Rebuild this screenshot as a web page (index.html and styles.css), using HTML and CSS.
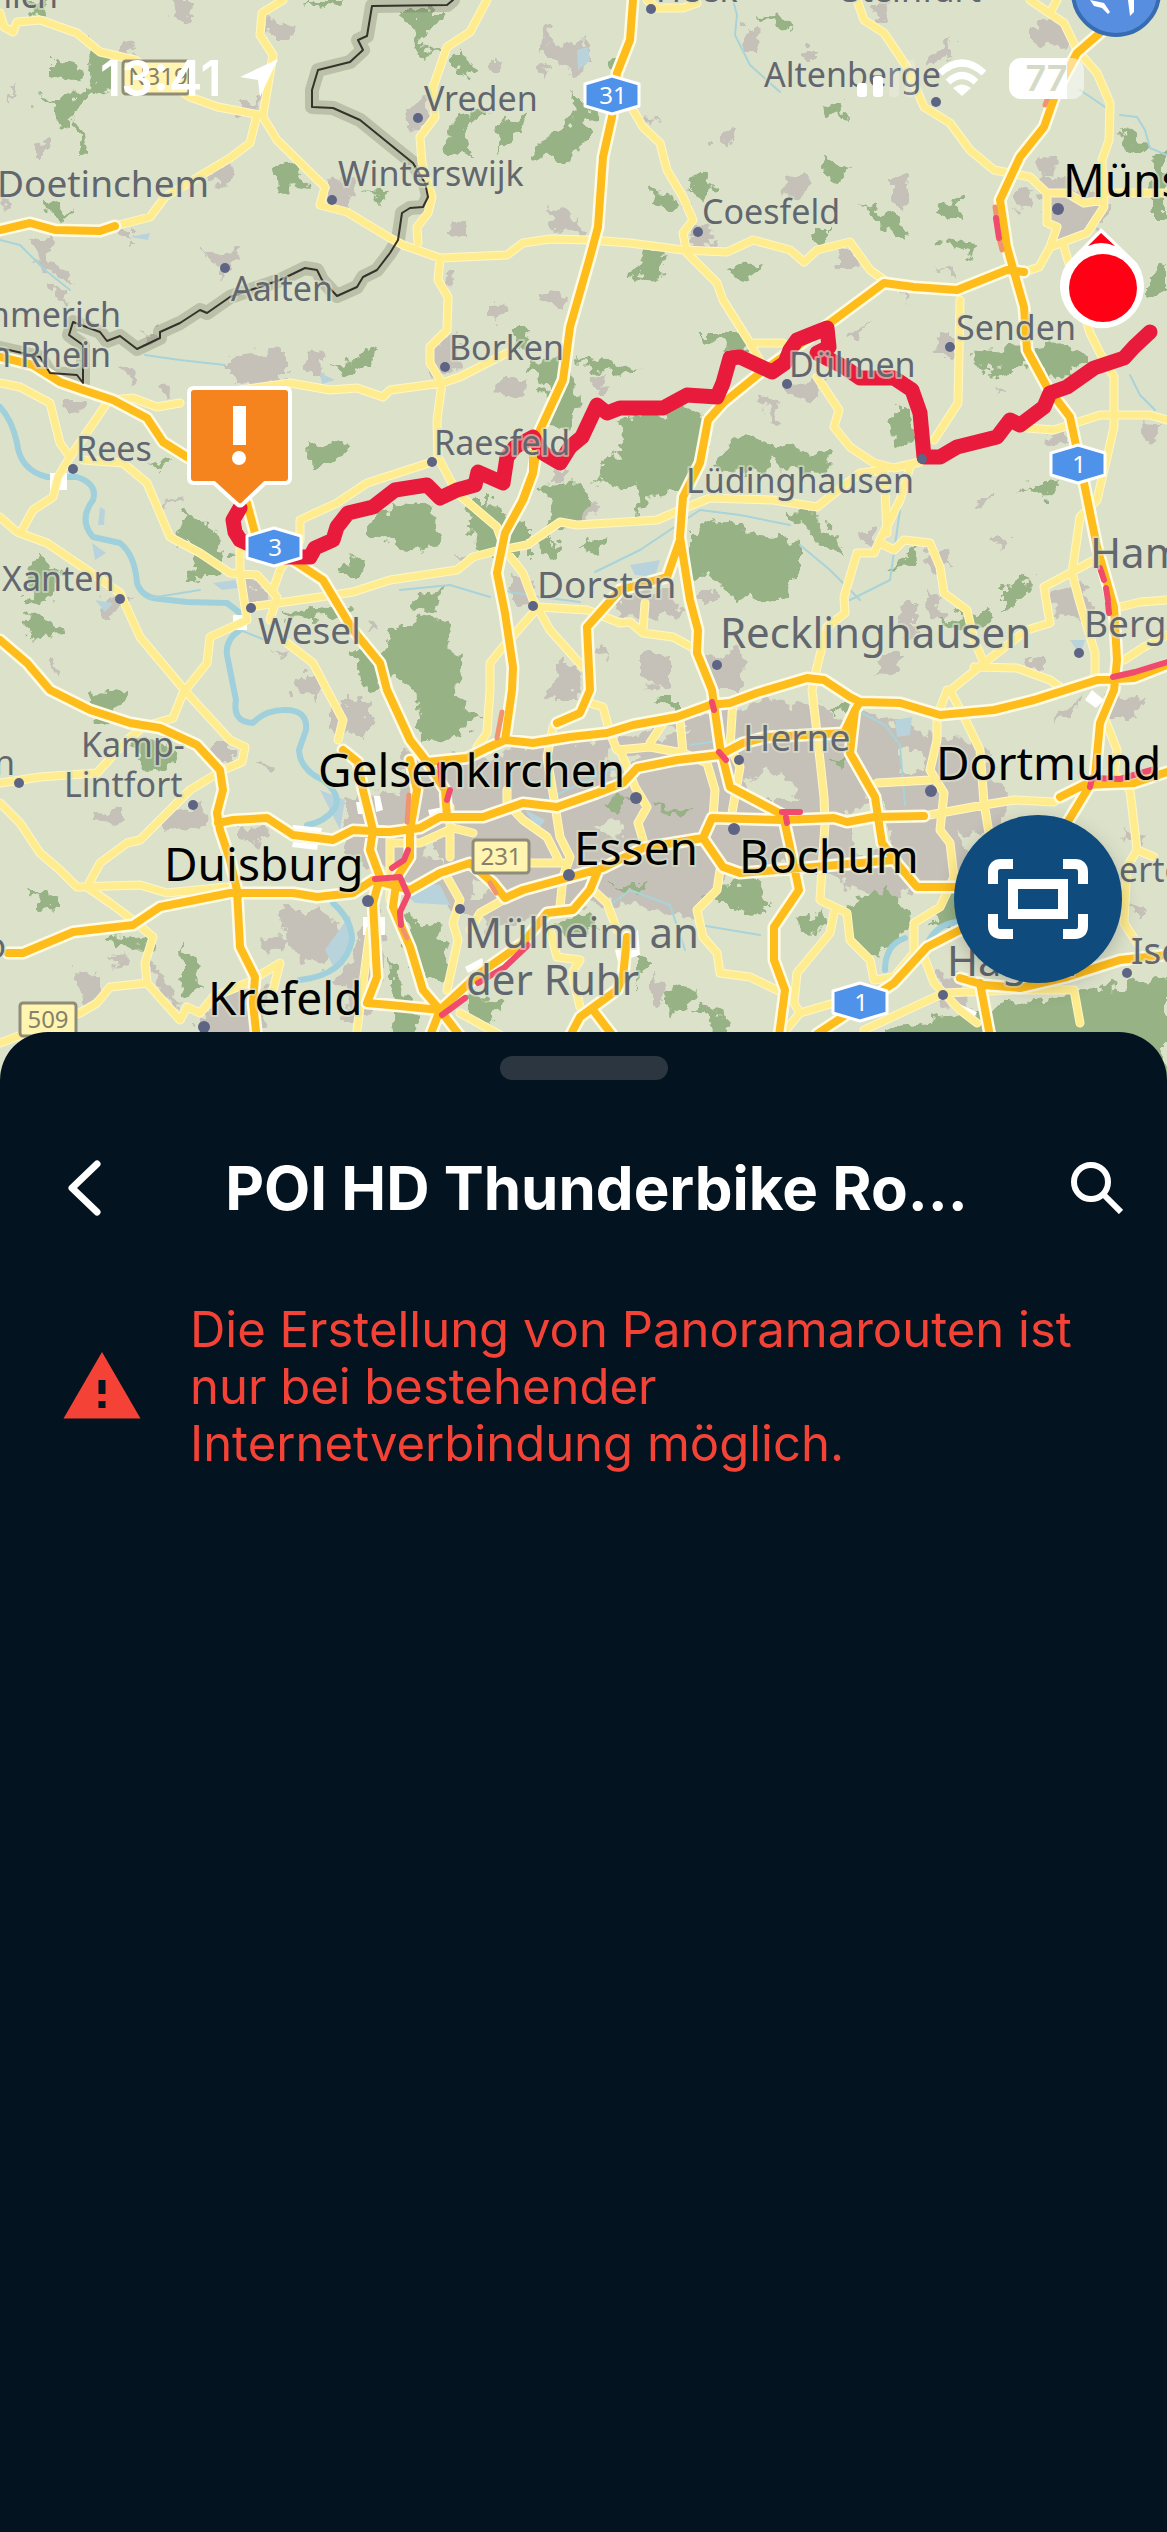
FILE: index.html
```html
<!DOCTYPE html>
<html lang="de">
<head>
  <meta charset="UTF-8">
  <title>POI HD Thunderbike</title>
  <meta name="viewport" content="width=device-width, initial-scale=1">
  <link rel="stylesheet" href="styles.css">
</head>
<body>

  <main class="map">
    <svg class="map-canvas" viewBox="0 0 1167 1080" preserveAspectRatio="xMidYMin slice">
      <defs>
        <filter id="rough" x="0" y="0" width="100%" height="100%">
          <feTurbulence type="fractalNoise" baseFrequency="0.07" numOctaves="3" seed="4" result="n"/>
          <feDisplacementMap in="SourceGraphic" in2="n" scale="24" xChannelSelector="R" yChannelSelector="G"/>
        </filter>
        <path id="hex" d="M0 -19 L27 -11 V11 L0 19 L-27 11 V-11 Z"/>

        <!-- Landstrassen -->
        <path id="minor" d="M0 13 L4 27 13 32 17 22 40 20 77 33 100 52 135 60 190 97 218 107 260 115
          M283 0 L262 13 260 35 273 55 263 115 M257 115 L250 143 230 158 205 173 165 197 150 217 115 226
          M263 117 L277 140 325 187 320 205 347 212 390 238 403 245 440 258 507 255 523 243 550 239 590 240 630 243 683 250 727 252 753 240 790 250 804 262 817 250 850 242 870 270 887 282
          M487 0 L470 32 447 47 433 87 435 117 420 137 422 163 432 197 428 213 417 227 418 243
          M440 258 L438 280 448 297 447 330 430 347 430 363 442 383 437 420 438 457 457 493 497 527 505 550 523 573 533 600 550 630 583 667
          M113 400 L133 398 157 407 180 403 M240 390 L290 383 330 390 357 388 383 397 390 390 442 383 460 377 507 353
          M0 383 L20 387 50 403 60 443 70 457 107 403 M70 457 L58 477 53 497 33 510 22 530
          M0 517 L17 532 47 543 87 570 120 593 140 637 187 693 230 740 245 747 242 762 223 770 190 790 140 840 127 843 100 863 87 887
          M83 460 L123 463 147 483 170 537 200 553 230 573 257 575 277 597 270 620 M240 543 V573 L247 620 210 637 207 663 183 693 173 718 143 727 127 740 97 773 40 777 0 783
          M250 607 L320 597 353 592 390 580 457 570 473 557 500 550 527 545 560 522 577 525 657 520 680 510 710 498 773 500 817 507 860 473 884 470
          M273 590 L280 570 300 540 V520 L337 503 367 483 432 462
          M287 643 L313 663 327 690 343 720 338 740 M0 803 L20 823 40 853 60 870 77 887 140 885 167 893 227 887 M193 903 V893
          M87 887 L110 903 133 920 153 937 145 963 147 983 180 1020 187 1007 200 1013 213 997 247 983 280 963 273 990 M147 983 L110 987 97 1003 80 1013 0 1043
          M633 110 L643 127 660 143 667 170 683 197 693 220 683 233 687 253 717 283 723 300 750 343 783 343 M750 343 L765 370
          M647 0 L657 8 683 8 697 3
          M857 0 L864 20 884 33 907 67 924 107 950 123 970 150 994 170 1030 177 1047 193 1067 193 1084 203 1104 200
          M1047 193 V223 L1057 227 1050 247 1087 233 1104 207 1102 160 1109 140 1110 103 1097 73 1077 50 1064 23 1030 0 M1050 13 L1057 0
          M1050 247 L1039 267 1024 272 M1064 247 L1070 267 1090 333 1100 353 1114 377 V427 L1097 500 1080 517 1072 573 1080 603 1095 653 V677
          M1104 193 H1167 M1027 428 L1054 430 1100 415 1150 415 1167 420 M960 300 L958 403 934 440
          M817 377 L839 410 834 427 850 447 874 463 894 468 920 462 M884 470 L887 533 M910 467 L900 500 880 540 874 553 857 553 844 597 845 613 827 627 817 667 812 690 817 733 824 797 825 823 820 900 847 913 850 940 870 960 874 980
          M880 543 L894 550 904 540 930 543 940 567 944 593 967 610 974 640 984 663 1027 630 1050 623 1044 587 1070 573 1094 560
          M984 663 L947 693 M974 667 L1017 668 1050 680 1064 690
          M947 690 L937 717 V740 L930 770 944 793 940 830 950 843 954 877 940 907 914 923 V953 L894 977 874 980
          M877 783 L930 780 M924 816 L984 805 1014 800 1054 802 M950 690 L967 723 980 750 984 803 989 833
          M834 913 L830 933 797 973 794 1003 800 1013 834 1003 M784 1032 L800 1013 M864 1030 L907 1010 944 993 1014 990 1074 990 1080 1023 M924 957 L934 983 960 1010 977 1023
          M1104 717 L1117 750 1114 773 1130 790 1137 850 1127 867 1124 923 1137 943 M1137 850 L1154 857
          M1120 607 L1140 602 1167 600 M1124 660 L1144 647 1167 635
          M490 690 L487 733 477 747 M533 613 L503 647 490 663 V690 M537 607 L587 610 620 623 630 622 643 633 673 637 697 650 M645 603 L643 630
          M553 727 L547 757 553 793 560 837 570 857 563 877 560 907 M507 790 V803 L523 820 547 837 560 863
          M590 703 L603 707 610 733 617 750 650 747 683 753 707 763 715 790 713 817 M733 700 L730 747 740 767 732 813 M680 720 L683 753 M663 723 L650 743
          M620 750 L635 787 647 807 638 823 643 840 M390 843 L420 843 453 828 473 833 M450 807 V857 M447 877 L460 900 453 923 458 940 447 990
          M503 900 L480 913 470 930 M530 863 H563 M593 890 L607 903 617 930 M550 930 L557 957 580 960 572 973 580 1007
          M720 870 L717 890 697 910 703 937 717 953 720 973 750 977 783 993 M460 1013 L500 1035 M370 930 L357 1030 M390 840 V900"/>

        <!-- Autobahnen -->
        <path id="major" d="M0 230 L30 223 55 230 100 231 115 226
          M633 0 L630 40 617 73 612 117 603 157 598 227 590 257 570 327 563 380 540 430 533 473 523 500 505 533 497 573 505 613 513 667 512 690 505 740
          M427 762 L467 758 487 748 505 740 533 743 570 737 607 733 633 725 677 717 710 705 730 703 757 693 807 678 824 680 850 697 860 702 900 703 940 715 994 710 1034 700 1097 680 1134 678 1167 665
          M0 357 L33 365 60 382 83 390 113 400 147 418 163 442 187 457 230 480 247 503 255 533 275 550 297 563 323 580 353 630 380 663 387 690 410 740 427 762 445 790 447 817
          M0 640 L27 663 50 690 90 710 130 723 160 728 197 745 220 770 223 790 217 813 220 830 230 860 237 890 240 947 255 977 253 1003 257 1040
          M218 823 L233 820 267 818 293 835 333 840 353 830 390 832 420 828 440 817 483 817 523 803 557 807 597 793 623 783 637 768 677 760 720 755 743 743 767 737 844 733 855 710 860 702
          M830 323 L760 373 723 403 708 420 700 463 683 497 680 537 690 600 698 630 697 653 712 690 720 747 730 787 783 815 790 847 799 890 774 927 774 960 785 990 779 1036
          M830 323 L884 283 914 287 957 290 1007 270 1024 272 M680 540 L667 577 620 590 587 627 590 690 580 713 557 723
          M1116 20 L1100 33 1077 53 1057 90 1044 127 1020 157 1000 200 1007 247 1024 307 1027 350 1047 387 1070 417 1084 483 1097 547 1114 607 1117 660 1114 690 1100 723 1095 777 1067 823 1030 870
          M1060 797 L1084 785 1134 783 1167 772
          M8 953 H23 L73 932 133 925 160 907 230 893 293 893 317 897 353 893 373 880 410 890 440 873 470 863 493 883 505 898 523 890 567 878 603 868 643 848 703 838 712 818 783 820 834 818 847 822 874 817 924 816
          M703 838 L723 867 740 873 814 867 894 860 900 867 917 887 954 887 M855 710 L850 753 875 797 882 843 897 863
          M343 750 L358 762 363 790 373 830 370 850 380 877 373 903 377 977 367 1003 390 1005 440 1010
          M410 760 L417 790 410 830 410 857 397 877 393 907 410 947 423 990 440 1010 460 1036 M440 1010 L430 1036
          M440 1010 L480 973 523 943 547 913 573 910 590 890 597 873
          M627 937 L623 977 617 990 580 1017 570 1036 M593 1010 L613 1036
          M817 1034 L894 983 927 947 960 930 M960 978 L984 985 1020 988 1067 977 1120 960 1147 957 1167 955 M980 983 L990 1036"/>
      </defs>

      <rect class="land" width="1167" height="1080"/>

      <!-- Siedlungen -->
      <g class="urban" filter="url(#rough)">
        <path d="M400 750 L480 760 540 745 620 735 700 715 770 700 860 710 920 730 980 745 1010 800 1000 850 960 880 880 900 790 860 720 880 690 920 620 900 560 910 490 930 440 900 400 880 370 840 400 790Z"/>
        <path d="M370 740 L330 730 330 700 370 700Z M345 800 L400 790 400 870 345 860Z M280 910 L320 910 345 940 320 970 290 950Z M260 935 L290 940 280 955 265 950Z M340 980 L375 900 385 950 370 1020 345 1020Z M200 1015 L240 990 270 985 260 1040 200 1040Z"/>
        <path d="M165 810 L205 800 208 825 185 835 165 825Z M210 745 L235 745 235 765 215 765Z M240 825 L270 830 265 845 240 840Z M75 970 L100 975 100 1005 80 1000Z M150 960 L170 985 180 1010 155 985Z M105 958 L128 955 115 970Z M88 815 L120 810 120 825 92 823Z M255 760 L275 765 272 775Z"/>
        <path d="M172 0 L192 0 190 15 175 20Z M118 38 L135 40 130 55 118 50Z M268 20 L295 25 290 38 270 38Z M5 85 L18 85 12 100Z M32 145 L52 142 50 155 35 155Z M240 100 L260 100 255 115 240 115Z M210 170 L232 163 230 185 210 183Z M330 180 L352 183 350 207 328 205Z"/>
        <path d="M30 240 L52 240 50 260 70 275 75 285 40 270Z M205 252 L240 250 235 270 220 272Z M120 230 L135 230 135 240 122 240Z M50 285 L65 290 65 310Z M0 190 L12 200 5 215Z M140 330 L165 330 150 345Z"/>
        <path d="M230 355 L285 350 285 385 230 382Z M305 350 L325 352 322 375 305 375Z M160 387 L173 388 172 397 160 395Z M65 400 L85 400 82 413 68 412Z M123 365 L135 370 130 385Z M150 505 L185 495 182 502Z"/>
        <path d="M407 105 L427 95 430 120 415 135Z M545 25 L553 25 552 45 540 50Z M548 45 L590 40 590 65 575 72 550 62Z M490 60 L503 62 500 72 490 72Z M535 67 L548 68 540 80Z M550 210 L580 215 582 235 555 230Z M450 225 L465 223 460 240 450 238Z M490 300 L505 303 500 322 490 315Z M540 293 L570 295 560 305 540 303Z M445 273 L455 273 450 288Z"/>
        <path d="M645 112 L655 118 652 127Z M745 25 L760 27 758 50 745 47Z M715 137 L740 132 738 142 715 144Z M690 220 L712 225 715 248 690 247Z M430 345 L455 335 460 370 430 375Z M495 380 L525 380 522 395 497 392Z M590 375 L605 375 602 390 592 390Z M555 470 L567 470 565 480 555 482Z"/>
        <path d="M875 0 L890 0 885 20 878 22Z M800 47 L815 47 815 62 805 62Z M930 50 L955 40 950 55 930 62Z M1030 25 L1060 20 1068 45 1045 48 1030 38Z M1035 160 L1058 155 1055 172 1038 172Z M1015 190 L1035 190 1030 212 1015 210Z M1040 170 L1105 200 1105 225 1060 245 1045 225Z M890 180 L908 182 905 205 890 200Z M785 180 L805 178 803 200 787 198Z"/>
        <path d="M838 250 L857 250 855 265 838 265Z M940 265 L952 270 950 280Z M898 290 L910 295 908 302Z M845 335 L870 328 860 340Z M935 335 L955 335 955 355 937 355Z M785 385 L825 378 815 400 790 395Z M755 395 L775 400 780 425 765 410Z M990 387 L1010 395 1000 398Z M1045 435 L1067 430 1067 445 1047 447Z M1140 420 L1163 422 1155 440 1143 435Z"/>
        <path d="M975 495 L990 495 985 510 977 508Z M995 537 L1008 537 1008 543 997 545Z M857 530 L875 530 875 547 860 545Z M925 550 L950 550 955 565 935 570Z M925 590 L940 595 945 625 930 615Z M1050 590 L1090 585 1085 620 1055 615Z M900 605 L915 605 915 640 905 635Z M875 655 L905 655 900 672 875 675Z M1025 660 L1045 655 1045 670 1030 670Z"/>
        <path d="M455 555 L467 555 465 565 457 565Z M560 515 L595 500 600 510 565 530Z M510 575 L535 580 530 605 510 600Z M620 590 L670 590 680 615 650 620 620 615Z M700 590 L715 590 715 605 700 605Z M700 660 L740 650 745 690 710 690Z M560 660 L580 665 575 700 545 700Z M600 650 L607 645 608 660Z M640 655 L670 650 670 690 640 680Z"/>
        <path d="M245 575 L270 590 265 605 248 605Z M100 600 L132 595 125 610 105 615Z M270 645 L290 650 285 660Z M290 675 L320 675 320 700 300 695Z M365 620 L378 622 372 632Z M50 660 L60 665 58 680Z M1105 695 L1145 700 1130 720 1105 720Z M1120 830 L1145 835 1140 850Z M1060 710 L1080 700 1070 720 1050 725Z M650 975 L665 985 660 1010 650 1005Z M940 975 L960 970 970 1010 940 1005Z M1125 900 L1150 905 1140 925Z"/>
      </g>
      <path class="land" filter="url(#rough)" d="M610 750 L640 760 630 775 605 770Z M850 810 L885 800 890 850 850 850Z M740 780 L780 770 800 800 760 800Z M590 825 L625 820 620 840Z M475 875 L500 890 470 900Z M420 850 L440 835 440 865Z M900 750 L925 750 920 775 900 775Z M960 830 L990 840 980 870Z M650 720 L690 730 660 740Z M830 710 L845 700 850 725Z"/>

      <!-- Wald -->
      <g class="forest" filter="url(#rough)">
        <path d="M50 60 L82 68 78 78 60 73 50 75Z M82 42 L110 52 115 85 95 90 83 103 68 127 57 125 50 105 38 97 62 102 88 87 97 65Z M77 115 L82 135 87 155 75 153Z M275 170 L293 163 310 190 295 188 280 192Z M42 200 L73 212 65 220 48 215Z M362 190 L388 195 385 200Z M20 0 L50 0 48 17 30 15Z M305 0 L345 0 340 7 310 5Z"/>
        <path d="M400 12 L445 12 440 25 422 35 425 50 437 55 418 58 414 30Z M455 50 L475 65 468 82 455 70Z M445 130 L460 115 492 110 470 125 462 145 475 158 450 150Z M495 125 L527 113 515 135 500 152 498 140Z M573 92 L597 112 590 120 582 150 562 163 530 153 545 138 570 128Z M610 65 L622 52 618 75Z"/>
        <path d="M702 170 L714 185 707 200 688 193Z M652 190 L685 203 668 213 653 208Z M628 278 L640 257 667 252 658 280 645 272Z M728 268 L765 262 755 278 732 275Z M525 370 L560 355 580 395 570 430 550 425 545 385Z M577 357 L610 362 640 368 620 375 590 370Z M510 330 L530 330 525 345 515 342Z M700 333 L745 333 755 355 720 345Z M757 15 L790 18 788 32Z"/>
        <path d="M617 422 L690 405 708 420 700 457 683 490 655 495 638 512 640 490 593 483 607 460 625 450Z M717 453 L750 433 775 450 765 470 722 472Z M395 505 L430 508 440 540 423 550 390 545 363 527Z M467 500 L490 500 527 527 527 560 500 560 472 543Z M540 487 L577 483 592 500 573 517 550 545 552 510Z M540 540 L563 545 557 560 542 555Z M580 545 L608 537 600 555Z"/>
        <path d="M690 533 L723 517 760 535 800 540 800 570 780 605 740 597 690 570Z M417 593 L447 590 430 612 415 608Z M390 630 L440 615 455 627 447 650 463 660 453 690 483 717 450 742 420 737 415 690 390 670Z M187 510 L213 530 230 557 207 583 185 580 200 553 175 535Z M38 553 L60 570 50 603 27 600 30 565Z M27 612 L60 630 53 640 30 637Z M305 440 L320 448 345 440 340 458 310 470Z"/>
        <path d="M280 612 L347 605 345 615 290 618Z M333 563 L367 555 363 575 340 575Z M395 627 L405 660 390 680 372 695 350 650 380 655Z M333 368 L375 350 372 362 345 375Z M145 465 L170 460 165 472Z M784 510 L817 513 847 553 820 545 805 525Z M894 407 L910 413 912 450 895 447Z M770 445 L830 457 827 473 780 470Z M967 350 L1067 345 1090 357 1050 382 1040 365 990 375Z M1024 487 L1060 482 1045 498Z"/>
        <path d="M1000 587 L1034 577 1017 607 1000 612Z M937 620 L987 610 1000 622 960 630Z M887 570 L914 547 917 562Z M820 157 L850 168 838 183 825 178Z M934 213 L962 195 963 225 950 218Z M940 237 L975 243 973 257 945 248Z M860 203 L900 220 905 237 880 228Z M820 105 L840 100 843 118 822 115Z M807 230 L835 230 822 247Z M1118 122 L1140 135 1142 150 1125 145Z M1155 155 L1167 150 V215 H1150Z M1150 275 L1167 265 V290 L1150 295Z"/>
        <path d="M97 690 L125 693 113 722 85 715Z M130 735 L178 745 170 765 145 772Z M28 890 L60 895 60 910 42 908Z M180 943 L193 960 202 990 182 995Z M110 935 L155 940 150 946 115 945Z M405 917 L440 925 452 973 423 985 408 945Z M390 957 L410 1000 420 1040 393 1040Z M465 997 L505 1000 490 1020 465 1017Z M663 993 L695 985 690 1007 670 1015Z M698 1003 L728 1020 725 1036 708 1030Z"/>
        <path d="M847 905 L890 885 900 905 912 925 877 960 852 940Z M954 890 L965 925 930 923Z M797 923 L825 910 815 940Z M860 1040 L900 1025 1000 1008 1084 990 1134 983 1167 980 V1080 H860Z M555 925 L590 915 600 930 560 935Z M700 890 L760 880 770 905 720 905Z M610 885 L650 885 640 895Z M650 805 L690 810 680 818Z M600 800 L630 795 620 815Z M830 760 L850 760 840 770Z M655 700 L675 700 675 712Z M830 705 L845 705 838 715Z M740 895 L765 900 760 915 735 910Z M635 950 L648 960 635 990Z"/>
      </g>

      <!-- Gewässer -->
      <g class="lake">
        <path d="M577 50 L588 47 590 60 578 70Z M630 565 L660 560 655 577 635 575Z M895 720 L912 717 910 735 897 737Z M325 950 L350 915 353 940 335 970Z M95 600 L113 603 105 612Z M1070 640 L1085 640 1080 655Z M390 880 L440 885 450 905 415 903Z M130 237 L150 233 148 240Z M320 373 L335 380 322 384Z M525 810 L545 820 538 830Z M320 790 L345 800 340 830 330 810Z"/>
        <path d="M100 507 L105 510 104 525 98 525Z M92 543 L106 553 95 560Z M213 583 L235 580 238 588 222 590Z"/>
      </g>
      <path class="river" d="M0 407 Q12 420 17 443 Q20 470 47 477 L77 477 Q98 484 93 500 Q78 520 93 537 L120 543 Q135 555 137 583 Q142 598 160 599 L187 602 227 603 240 613 M240 630 Q225 640 227 655 L236 700 Q232 722 253 723 Q265 710 285 710 Q308 710 306 730 L299 750 Q300 770 323 780 Q342 795 335 808 Q325 822 307 825 M333 903 Q352 920 352 940 Q345 975 300 980 M929 940 Q940 922 960 922 M885 970 Q885 945 905 938"/>
      <path class="stream" d="M0 240 L20 245 45 270 70 290 M733 0 L737 15 735 35 750 65 780 92 M1080 90 L1105 107 M1120 115 L1137 117 1145 130 1150 148 1167 155 M500 590 L540 597 580 602 M595 572 L640 550 700 510 740 515 790 525 M400 590 L450 585 490 597 M860 600 L830 570 800 545 M850 600 L890 580 900 510 M1130 375 L1140 395 1155 410 M860 712 L885 725 900 745 905 805 M150 598 L200 590 M240 630 L265 640 M545 800 L610 770 640 765 M690 745 L760 735 M610 905 L630 890 670 905 685 950 M145 355 L180 360 225 365 M700 925 L760 935"/>

      <g class="bridge">
        <path d="M50 473 H67 V490 H50Z M233 615 H247 V630 H233Z M293 825 L322 828 321 834 292 831Z M293 842 L318 844 317 850 292 847Z M356 802 L362 802 364 814 358 814Z M374 796 L380 796 383 810 376 812Z M428 810 L448 806 449 814 430 817Z M615 950 L638 930 640 955 618 962Z"/>
        <path d="M465 967 L482 958 484 964 468 973Z M955 1002 L977 1012 972 1022 955 1010Z M1085 700 L1092 690 1104 700 1096 708Z M363 917 H385 V935 H363Z"/>
      </g>
      <path class="border-halo" d="M453 0 L447 5 372 6 367 36 358 40 363 50 350 62 318 70 312 90 V107 L333 108 360 120 413 163 425 183 428 197 423 207 410 208 402 213 398 240 390 253 377 270 363 277 357 287 337 296 322 280 317 270 305 268 280 280 230 297 207 313 200 310 180 323 160 332 V338 L137 349 120 336 107 341 100 332 73 322 69 335 83 345 V383 L77 375 50 373 40 357 0 348"/>
      <use href="#minor" class="minor-case"/>
      <use href="#minor" class="minor"/>
      <use href="#major" class="major-case"/>
      <use href="#major" class="major"/>
      <path class="border-line" d="M453 0 L447 5 372 6 367 36 358 40 363 50 350 62 318 70 312 90 V107 L333 108 360 120 413 163 425 183 428 197 423 207 410 208 402 213 398 240 390 253 377 270 363 277 357 287 337 296 322 280 317 270 305 268 280 280 230 297 207 313 200 310 180 323 160 332 V338 L137 349 120 336 107 341 100 332 73 322 69 335 83 345 V383 L77 375 50 373 40 357 0 348"/>

      <!-- Verkehr -->
      <path class="jam-light" d="M995 207 L997 220 M999 238 L1002 250 M1049 95 L1045 105 M502 712 L497 738 M409 795 L407 822 M490 883 L496 893 M403 930 L407 938"/>
      <path class="jam" d="M996 218 L999 238 M1100 568 L1104 580 M1106 588 L1108 600 M1108 603 L1109 613 M1113 677 L1135 672 1167 662 M1090 787 L1092 778 1120 779 1155 769 M408 850 L404 860 392 868 M375 879 L400 877 408 895 400 912 401 925 M442 1015 L465 998 M478 983 L505 967 528 945 M440 765 L442 785 M450 790 L447 800 M712 702 L714 710 M719 752 L726 760 M782 812 L800 812 M786 817 L787 823"/>

      <path class="route" d="M240 508 L233 520 235 532 240 540 277 557 310 557 315 548 333 540 337 527 348 513 373 507 395 490 427 485 440 498 457 490 475 485 478 472 503 483 507 457 515 447 533 437 543 453 560 463 570 447 582 437 597 405 607 413 620 408 663 408 687 395 717 397 723 383 730 358 740 357 772 372 785 363 790 350 797 340 827 328 829 347 817 353 844 367 860 378 894 378 912 390 920 413 924 457 940 457 957 447 997 437 1010 420 1020 425 1044 407 1050 393 1067 387 1094 368 1124 358 1134 347 1150 332"/>
      <path class="major" d="M533 450 V473 L523 500"/>

      <g class="dots">
        <circle cx="332" cy="200" r="5"/><circle cx="225" cy="268" r="5"/><circle cx="418" cy="118" r="5"/><circle cx="698" cy="232" r="5"/>
        <circle cx="73" cy="469" r="5"/><circle cx="120" cy="599" r="5"/><circle cx="251" cy="608" r="5"/><circle cx="445" cy="367" r="5"/>
        <circle cx="432" cy="462" r="5"/><circle cx="533" cy="606" r="5"/><circle cx="787" cy="384" r="5"/><circle cx="922" cy="459" r="5"/>
        <circle cx="717" cy="665" r="5"/><circle cx="950" cy="347" r="5"/><circle cx="1058" cy="209" r="6"/><circle cx="936" cy="102" r="5"/>
        <circle cx="651" cy="9" r="5"/><circle cx="1079" cy="653" r="5"/><circle cx="19" cy="783" r="5"/><circle cx="193" cy="805" r="5"/>
        <circle cx="368" cy="901" r="6"/><circle cx="204" cy="1027" r="6"/><circle cx="636" cy="798" r="6"/><circle cx="569" cy="875" r="6"/>
        <circle cx="460" cy="909" r="5"/><circle cx="739" cy="760" r="5"/><circle cx="734" cy="829" r="6"/><circle cx="931" cy="791" r="6"/>
        <circle cx="943" cy="995" r="5"/><circle cx="1127" cy="973" r="5"/>
      </g>

      <g class="town small">
        <text x="424" y="111">Vreden</text>
        <text x="338" y="186">Winterswijk</text>
        <text x="231" y="301">Aalten</text>
        <text x="121" y="327" text-anchor="end">Emmerich</text>
        <text x="111" y="367" text-anchor="end">am Rhein</text>
        <text x="76" y="461">Rees</text>
        <text x="2" y="591">Xanten</text>
        <text x="449" y="360">Borken</text>
        <text x="434" y="455">Raesfeld</text>
        <text x="702" y="224">Coesfeld</text>
        <text x="764" y="87">Altenberge</text>
        <text x="956" y="340">Senden</text>
        <text x="789" y="377">Dülmen</text>
        <text x="686" y="493">Lüdinghausen</text>
        <text x="81" y="757">Kamp-</text>
        <text x="64" y="797">Lintfort</text>
        <text x="15" y="775" text-anchor="end">n</text>
        <text x="6" y="958" text-anchor="end">o</text>
        <text x="58" y="8" text-anchor="end">nich</text>
        <text x="656" y="2">Heek</text>
        <text x="842" y="2">Steinfurt</text>
        <text x="1119" y="882">erte</text>
      </g>
      <g class="town medium">
        <text x="-3" y="197">Doetinchem</text>
        <text x="258" y="644">Wesel</text>
        <text x="537" y="598">Dorsten</text>
        <text x="1084" y="637">Bergkamen</text>
        <text x="743" y="751">Herne</text>
        <text x="1131" y="964">Iserlohn</text>
      </g>
      <g class="town large">
        <text x="720" y="648">Recklinghausen</text>
        <text x="1090" y="568">Hamm</text>
        <text x="464" y="948">Mülheim an</text>
        <text x="466" y="995">der Ruhr</text>
        <text x="947" y="976">Hagen</text>
      </g>
      <g class="city">
        <text x="1063" y="197">Münster</text>
        <text x="318" y="787">Gelsenkirchen</text>
        <text x="164" y="881">Duisburg</text>
        <text x="208" y="1015">Krefeld</text>
        <text x="574" y="865">Essen</text>
        <text x="739" y="873">Bochum</text>
        <text x="936" y="780">Dortmund</text>
      </g>

      <g class="shield">
        <use href="#hex" x="612" y="95"/><text x="613" y="104">31</text>
        <use href="#hex" x="274" y="547"/><text x="275" y="556">3</text>
        <use href="#hex" x="1078" y="464"/><text x="1079" y="473">1</text>
        <use href="#hex" x="860" y="1002"/><text x="861" y="1011">1</text>
      </g>
      <g class="plate">
        <rect x="123" y="61" width="66" height="33" rx="3"/><text x="158" y="85">N319</text>
        <rect x="20" y="1003" width="56" height="33" rx="3"/><text x="48" y="1028">509</text>
        <rect x="473" y="840" width="56" height="33" rx="3"/><text x="501" y="865">231</text>
      </g>

      <!-- Gefahrenstelle -->
      <path class="warn-pin" d="M194 388 H285 Q290 388 290 393 V478 Q290 483 285 483 H265 L243 504 Q240 507 237 504 L214 483 H194 Q189 483 189 478 V393 Q189 388 194 388Z"/>
      <rect class="white" x="233" y="406" width="13" height="39"/>
      <circle class="white" cx="239" cy="458" r="7"/>

      <!-- Ziel -->
      <path class="white" d="M1101 228 L1137 263 A42 42 0 1 1 1067 263Z"/>
      <path class="red" d="M1101 233 L1115 246 Q1101 240 1088 246Z"/>
      <circle class="red" cx="1103" cy="288" r="34"/>

      <circle class="airport" cx="1116" cy="-8" r="43"/>
      <path class="white" d="M1090 0 L1104 3 1110 12 1108 14 1102 8 1094 6Z M1128 0 L1134 0 1134 12 1130 16Z"/>
    </svg>

    <div class="statusbar">
      <span class="time">13:41</span>
      <svg class="arrow" viewBox="0 0 38 38"><path d="M38 0 L20 38 18 21 0 18Z"/></svg>
      <svg class="signal" viewBox="0 0 58 40"><rect x="0" y="25" width="10" height="14" rx="3"/><rect x="16" y="18" width="10" height="21" rx="3"/><rect class="dim" x="32" y="10" width="10" height="29" rx="3"/><rect class="dim" x="48" y="2" width="10" height="37" rx="3"/></svg>
      <svg class="wifi" viewBox="0 0 50 38"><path class="arc" d="M3 14 Q25 -6 47 14 M11 23 Q25 10 39 23"/><path d="M16 29 Q25 22 34 29 L25 37Z"/></svg>
      <span class="battery">77</span>
    </div>

    <button class="fab" aria-label="Route einpassen">
      <svg viewBox="0 0 100 80"><path d="M5 25 V13 Q5 5 13 5 H25 M75 5 H87 Q95 5 95 13 V25 M95 55 V67 Q95 75 87 75 H75 M25 75 H13 Q5 75 5 67 V55 M25 25 H75 V55 H25Z"/></svg>
    </button>
  </main>

  <section class="sheet">
    <div class="handle"></div>
    <header class="sheet-header">
      <button class="icon-btn" aria-label="Zurück">
        <svg class="back" viewBox="0 0 34 56"><path d="M30 4 L5 28 30 52"/></svg>
      </button>
      <h1>POI HD Thunderbike Ro...</h1>
      <button class="icon-btn" aria-label="Suchen">
        <svg class="search" viewBox="0 0 52 52"><circle cx="20" cy="20" r="17"/><path d="M32 32 L50 50"/></svg>
      </button>
    </header>
    <div class="alert" role="alert">
      <svg viewBox="0 0 24 24"><path d="M1 21h22L12 2 1 21zm12-3h-2v-2h2v2zm0-4h-2v-4h2v4z"/></svg>
      <p>Die Erstellung von Panoramarouten ist nur bei bestehender Internetverbindung möglich.</p>
    </div>
  </section>

</body>
</html>
```
FILE: styles.css
```css
* {
  box-sizing: border-box;
}

body {
  margin: 0;
  min-height: 100vh;
  display: flex;
  flex-direction: column;
  background-color: #03131f;
  color: #fff;
  font-family: Inter, "Liberation Sans", sans-serif;
}

button {
  border: none;
  padding: 0;
  background: none;
  color: inherit;
  cursor: pointer;
}

/* Karte */
.map {
  position: relative;
}

.map-canvas {
  display: block;
  width: 100%;
  aspect-ratio: 1167 / 1080;
  font-family: "Noto Sans", sans-serif;
}

.map-canvas use,
.river,
.stream,
.route,
.jam,
.jam-light,
.border-halo,
.border-line {
  stroke-linejoin: round;
  stroke-linecap: round;
}

.land { fill: #dce2ca; }
.urban { fill: #c5c1b8; }
.forest { fill: #97b285; }
.lake { fill: #b9d3dc; }
.river { fill: none; stroke: #9fd0dc; stroke-width: 6; }
.stream { fill: none; stroke: #a9d3d8; stroke-width: 2; }
.bridge { fill: #fff; }

.minor-case { fill: none; stroke: #fff6c4; stroke-width: 9; }
.minor { fill: none; stroke: #ffec8e; stroke-width: 7; }
.major-case { fill: none; stroke: #fffbe2; stroke-width: 13; }
.major { fill: none; stroke: #ffbd1c; stroke-width: 8; }

.border-halo { fill: none; stroke: #6f705c; stroke-opacity: 0.3; stroke-width: 14; }
.border-line { fill: none; stroke: #35322a; stroke-width: 2; }

.route { fill: none; stroke: #e91b3c; stroke-width: 15; }
.jam { fill: none; stroke: #f04a6c; stroke-width: 6; }
.jam-light { fill: none; stroke: #f0946e; stroke-width: 5; }

.dots { fill: #5d6484; }
.white { fill: #fff; }
.red { fill: #ff0015; }
.warn-pin { fill: #f5841f; stroke: #fff; stroke-width: 4; }
.airport { fill: #588ee0; stroke: #386cb0; stroke-width: 4; }

.town,
.city {
  paint-order: stroke;
  stroke: #dce2ca;
  stroke-opacity: 0.6;
  stroke-width: 4;
  stroke-linejoin: round;
}

.town { fill: #62666f; }
.city { fill: #000; font-size: 46px; }
.small { font-size: 34px; }
.medium { font-size: 37px; }
.large { font-size: 42px; }

.shield { fill: #4f92ea; stroke: #fff; stroke-width: 3; }
.shield text { fill: #fff; stroke: none; font-size: 24px; text-anchor: middle; }
.plate { fill: #fff4b0; stroke: #8f8c7a; stroke-width: 3; }
.plate text { fill: #85816d; stroke: none; font-size: 24px; text-anchor: middle; }

/* Statusleiste */
.statusbar {
  position: absolute;
  top: 48px;
  left: 0;
  right: 0;
  height: 60px;
  padding: 0 83px 0 100px;
  display: flex;
  align-items: center;
}

.time {
  font-size: 50px;
  font-weight: 600;
}

.statusbar svg {
  fill: #fff;
}

.arrow {
  width: 38px;
  height: 38px;
  margin-left: 18px;
}

.signal {
  width: 58px;
  height: 40px;
  margin-left: auto;
}

.signal .dim {
  opacity: 0.2;
}

.wifi {
  width: 50px;
  height: 38px;
  margin: 0 22px;
}

.wifi .arc {
  fill: none;
  stroke: #fff;
  stroke-width: 7;
}

.battery {
  width: 75px;
  height: 41px;
  border-radius: 12px;
  background: linear-gradient(90deg, #fff 77%, rgba(255, 255, 255, 0.5) 77%);
  color: #d5dac6;
  font-size: 36px;
  font-weight: 600;
  line-height: 41px;
  text-align: center;
}

.fab {
  position: absolute;
  right: 45px;
  bottom: 97px;
  width: 168px;
  height: 168px;
  border-radius: 50%;
  background-color: #0f4b7c;
  display: flex;
  align-items: center;
  justify-content: center;
  box-shadow: 0 6px 20px rgba(0, 0, 0, 0.2);
}

.fab svg {
  width: 100px;
  fill: none;
  stroke: #fff;
  stroke-width: 10;
}

/* Panel */
.sheet {
  position: relative;
  flex: 1;
  margin-top: -48px;
  padding-top: 24px;
  border-radius: 48px 48px 0 0;
  background-color: #03131f;
}

.handle {
  width: 168px;
  height: 24px;
  margin: 0 auto;
  border-radius: 12px;
  background-color: #2b3641;
}

.sheet-header {
  display: flex;
  align-items: center;
  height: 104px;
  margin-top: 56px;
  padding: 0 38px 0 52px;
}

.icon-btn {
  width: 64px;
  height: 64px;
  display: flex;
  align-items: center;
  justify-content: center;
}

.icon-btn svg {
  fill: none;
  stroke: #fff;
  stroke-width: 6;
}

.icon-btn .back {
  width: 34px;
  height: 56px;
  stroke-width: 7;
  stroke-linecap: round;
  stroke-linejoin: round;
}

.search {
  width: 52px;
  height: 52px;
}

h1 {
  flex: 1;
  margin: 0;
  padding-left: 12px;
  font-size: 60px;
  font-weight: 700;
  text-align: center;
  white-space: nowrap;
  overflow: hidden;
  text-overflow: ellipsis;
}

.alert {
  display: flex;
  align-items: center;
  gap: 46px;
  margin-top: 61px;
  padding: 0 80px 0 60px;
  color: #f44336;
}

.alert svg {
  flex: none;
  width: 84px;
  height: 84px;
  fill: #f44336;
}

.alert p {
  margin: 0;
  font-size: 49px;
  line-height: 57px;
}
```
